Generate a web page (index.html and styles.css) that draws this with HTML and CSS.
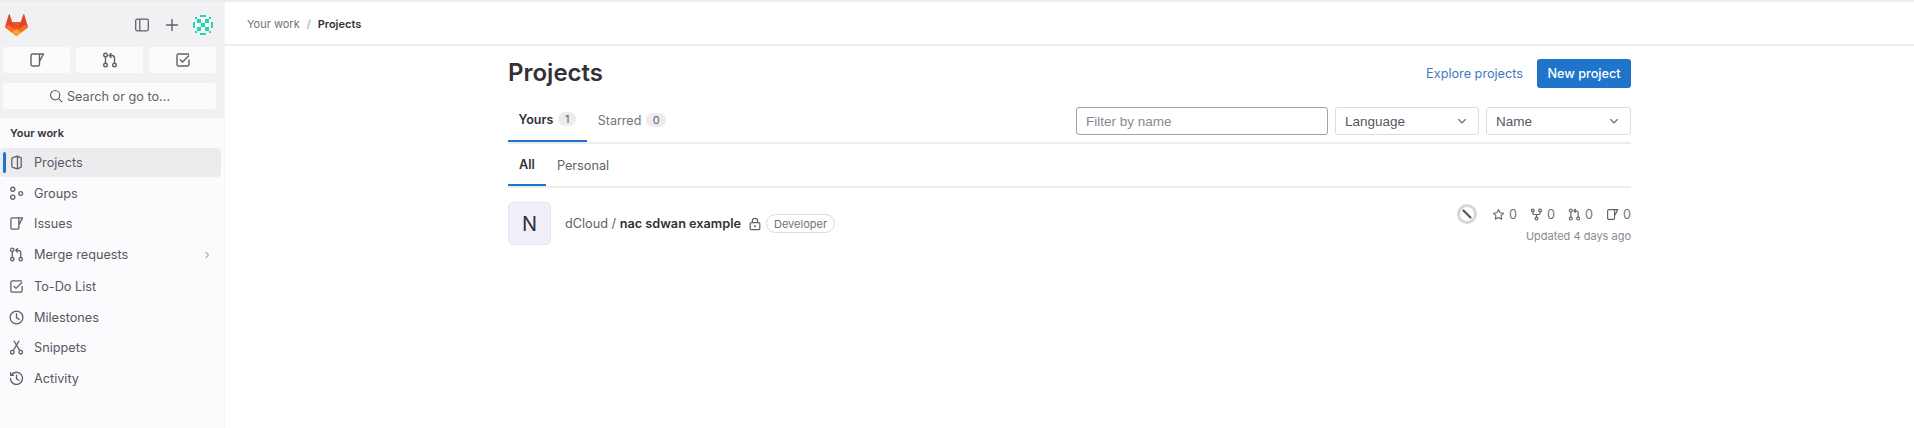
FILE: index.html
```html
<!DOCTYPE html>
<html lang="en">
<head>
<meta charset="utf-8">
<title>Projects</title>
<link rel="stylesheet" href="styles.css">
</head>
<body>
<svg class="defs" width="0" height="0" aria-hidden="true">
  <defs>
    <symbol id="i-issue" viewBox="0 0 16 16"><path d="M3.500 2H10.500V12.500A1.500 1.500 0 0 1 9 14H3.500A1.500 1.500 0 0 1 2 12.500V3.500A1.500 1.500 0 0 1 3.500 2zM10.500 2H14.500L10.500 9.500" fill="none" stroke="currentColor" stroke-width="1.400" stroke-linejoin="round"/></symbol>
    <symbol id="i-mr" viewBox="0 0 16 16"><g fill="none" stroke="currentColor" stroke-width="1.400"><circle cx="3.500" cy="3" r="1.800"/><circle cx="3.500" cy="13" r="1.800"/><circle cx="12.500" cy="13" r="1.800"/><path d="M3.500 4.800v6.400M12.500 11.200V6a2.500 2.500 0 0 0-2.500-2.500H7.500M9.500 1.200 7.200 3.500l2.300 2.300"/></g></symbol>
    <symbol id="i-todo" viewBox="0 0 16 16"><g fill="none" stroke="currentColor" stroke-width="1.400" stroke-linejoin="round"><path d="M14 7.500V12.500a1.500 1.500 0 0 1-1.500 1.500h-9A1.500 1.500 0 0 1 2 12.500v-9A1.500 1.500 0 0 1 3.500 2H14"/><path d="m5 7.500 2.500 2.500L14 3.500"/></g></symbol>
    <symbol id="i-search" viewBox="0 0 16 16"><g fill="none" stroke="currentColor" stroke-width="1.400"><circle cx="7" cy="7" r="5.300"/><path d="m11 11 3.700 3.700" stroke-linecap="round"/></g></symbol>
    <symbol id="i-project" viewBox="0 0 16 16"><g fill="none" stroke="currentColor" stroke-width="1.400" stroke-linejoin="round"><path d="M9 1.300 13 3v10l-4 1.700L4 13.200A1.500 1.500 0 0 1 3 11.800V4.200A1.500 1.500 0 0 1 4 2.800z"/><path d="M9 1.300v13.400"/></g></symbol>
    <symbol id="i-groups" viewBox="0 0 16 16"><g fill="none" stroke="currentColor" stroke-width="1.400"><circle cx="4" cy="3.500" r="2.200"/><circle cx="4" cy="12" r="2.200"/><circle cx="12.500" cy="8" r="2"/></g></symbol>
    <symbol id="i-clock" viewBox="0 0 16 16"><g fill="none" stroke="currentColor" stroke-width="1.400"><circle cx="8" cy="8" r="6.800"/><path d="M8 4v4.300l2.800 1.700" stroke-linecap="round"/></g></symbol>
    <symbol id="i-snippet" viewBox="0 0 16 16"><g fill="none" stroke="currentColor" stroke-width="1.400"><circle cx="3.500" cy="13" r="1.900"/><circle cx="12.500" cy="13" r="1.900"/><path d="M4.500 11.400 10.800 .8M11.500 11.400 5.200 .8"/></g></symbol>
    <symbol id="i-history" viewBox="0 0 16 16"><g fill="none" stroke="currentColor" stroke-width="1.400" stroke-linecap="round"><path d="M2.600 4.200A6.500 6.500 0 1 1 1.500 8"/><path d="M1.800 1.500v3h3"/><path d="M8 4.300v4l2.600 1.600"/></g></symbol>
    <symbol id="i-chev" viewBox="0 0 16 16"><path d="m6 3.500 4.500 4.500L6 12.500" fill="none" stroke="currentColor" stroke-width="1.500" stroke-linecap="round" stroke-linejoin="round"/></symbol>
    <symbol id="i-down" viewBox="0 0 16 16"><path d="M3.500 6 8 10.500 12.500 6" fill="none" stroke="currentColor" stroke-width="1.500" stroke-linecap="round" stroke-linejoin="round"/></symbol>
    <symbol id="i-star" viewBox="0 0 16 16"><path d="m8 1.800 1.900 4 4.400.6-3.200 3 .8 4.400L8 11.700l-3.900 2.100.8-4.400-3.200-3 4.400-.6z" fill="none" stroke="currentColor" stroke-width="1.300" stroke-linejoin="round"/></symbol>
    <symbol id="i-fork" viewBox="0 0 16 16"><g fill="none" stroke="currentColor" stroke-width="1.400"><circle cx="3.500" cy="3" r="1.700"/><circle cx="12.500" cy="3" r="1.700"/><circle cx="8" cy="13" r="1.700"/><path d="M3.500 4.700V6A2 2 0 0 0 5.500 8h5a2 2 0 0 0 2-2V4.700M8 8v3.300"/></g></symbol>
    <symbol id="i-lock" viewBox="0 0 16 16"><g fill="none" stroke="currentColor" stroke-width="1.400"><rect x="2.500" y="6.500" width="11" height="8" rx="1.300"/><path d="M5 6.500V4.500a3 3 0 0 1 6 0v2"/></g><circle cx="8" cy="10.500" r="1.200" fill="currentColor"/></symbol>
  </defs>
</svg>
<div class="app">
  <aside class="sidebar">
    <div class="side-top">
      <div class="brand-row">
        <svg class="logo" viewBox="0 0 24 23" aria-hidden="true">
          <path d="M12 23 .6 14.500a1.300 1.300 0 0 1-.4-1.500L3.800.8c.2-.6 1-.6 1.200 0L7.600 8.500h8.800L19 .8c.2-.6 1-.6 1.200 0L23.800 13a1.300 1.300 0 0 1-.4 1.500z" fill="#e24329"/>
          <path d="M12 23 7.600 8.500h8.800z" fill="#e8542a"/>
          <path d="M12 23 .6 14.500a1.300 1.300 0 0 1-.4-1.500l3.500-1.700 8.300 6.200z" fill="#fc6d26"/>
          <path d="m12 23 11.400-8.500a1.300 1.300 0 0 0 .4-1.500l-3.500-1.700-8.300 6.200z" fill="#fc6d26"/>
          <path d="m12 23-5-3.700 5-3.800 5 3.800z" fill="#fca326"/>
        </svg>
        <div class="brand-actions">
          <svg class="brand-icon" viewBox="0 0 16 16" aria-hidden="true"><g fill="none" stroke="currentColor" stroke-width="1.300"><rect x="1.700" y="2.200" width="12.600" height="11.600" rx="1.500"/><path d="M5.800 2.200v11.600"/></g></svg>
          <svg class="brand-icon plus" viewBox="0 0 16 16" aria-hidden="true"><path d="M8 2.500v11M2.500 8h11" fill="none" stroke="currentColor" stroke-width="1.400" stroke-linecap="round"/></svg>
          <svg class="identicon" viewBox="0 0 22 22" aria-hidden="true">
            <circle cx="11" cy="11" r="11" fill="#eef8f5"/>
            <g fill="#2fd0b0"><rect x="5" y="5" width="4" height="4"/><rect x="13" y="5" width="4" height="4"/><rect x="9" y="9" width="4" height="4"/><rect x="5" y="13" width="4" height="4"/><rect x="13" y="13" width="4" height="4"/><rect x="8" y="1" width="6" height="2"/><rect x="8" y="19" width="6" height="2"/><rect x="1" y="8" width="2" height="6"/><rect x="19" y="8" width="2" height="6"/><rect x="3" y="3" width="2" height="2"/><rect x="17" y="3" width="2" height="2"/><rect x="3" y="17" width="2" height="2"/><rect x="17" y="17" width="2" height="2"/></g>
          </svg>
        </div>
      </div>
      <div class="quick-row">
        <div class="quick-btn"><svg class="ico"><use href="#i-issue"/></svg></div>
        <div class="quick-btn"><svg class="ico"><use href="#i-mr"/></svg></div>
        <div class="quick-btn"><svg class="ico"><use href="#i-todo"/></svg></div>
      </div>
      <div class="search-btn"><svg class="ico"><use href="#i-search"/></svg><span>Search or go to...</span></div>
    </div>
    <nav class="side-nav">
      <div class="nav-title">Your work</div>
      <a class="nav-item active"><svg class="ico"><use href="#i-project"/></svg><span>Projects</span></a>
      <a class="nav-item"><svg class="ico"><use href="#i-groups"/></svg><span>Groups</span></a>
      <a class="nav-item"><svg class="ico"><use href="#i-issue"/></svg><span>Issues</span></a>
      <a class="nav-item has-sub"><svg class="ico"><use href="#i-mr"/></svg><span>Merge requests</span><svg class="chev"><use href="#i-chev"/></svg></a>
      <a class="nav-item"><svg class="ico"><use href="#i-todo"/></svg><span>To-Do List</span></a>
      <a class="nav-item"><svg class="ico"><use href="#i-clock"/></svg><span>Milestones</span></a>
      <a class="nav-item"><svg class="ico"><use href="#i-snippet"/></svg><span>Snippets</span></a>
      <a class="nav-item"><svg class="ico"><use href="#i-history"/></svg><span>Activity</span></a>
    </nav>
  </aside>
  <main class="main">
    <header class="crumbs"><span class="crumb">Your work</span><span class="sep">/</span><strong>Projects</strong></header>
    <div class="container">
      <div class="title-row">
        <h1>Projects</h1>
        <div class="title-actions"><a class="link">Explore projects</a><a class="btn-primary">New project</a></div>
      </div>
      <div class="tabs-row">
        <div class="tabs">
          <a class="tab active">Yours<span class="count">1</span></a>
          <a class="tab muted">Starred<span class="count">0</span></a>
        </div>
        <div class="filters">
          <div class="filter-input">Filter by name</div>
          <div class="select lang"><span>Language</span><svg class="down"><use href="#i-down"/></svg></div>
          <div class="select name"><span>Name</span><svg class="down"><use href="#i-down"/></svg></div>
        </div>
      </div>
      <div class="subtabs">
        <a class="subtab active">All</a>
        <a class="subtab">Personal</a>
      </div>
      <div class="project">
        <div class="avatar">N</div>
        <div class="project-name"><span class="ns">dCloud / </span><strong>nac sdwan example</strong><svg class="lock"><use href="#i-lock"/></svg><span class="role">Developer</span></div>
        <div class="project-meta">
          <div class="stats">
            <span class="ci"><svg viewBox="0 0 20 20" aria-hidden="true"><circle cx="10" cy="10" r="8.500" fill="#fff" stroke="#d6d6da" stroke-width="3"/><path d="m6.500 6.500 7 7" stroke="#55555c" stroke-width="2.200" stroke-linecap="round"/></svg></span>
            <span class="stat"><svg class="st"><use href="#i-star"/></svg>0</span>
            <span class="stat"><svg class="st"><use href="#i-fork"/></svg>0</span>
            <span class="stat"><svg class="st"><use href="#i-mr"/></svg>0</span>
            <span class="stat"><svg class="st"><use href="#i-issue"/></svg>0</span>
          </div>
          <div class="updated">Updated 4 days ago</div>
        </div>
      </div>
    </div>
  </main>
</div>
</body>
</html>
```

FILE: styles.css
```css
* { box-sizing: border-box; }
html, body { margin: 0; height: 100%; }
body { font-family: Inter, "Noto Sans", sans-serif; font-size: 12.700px; color: #333238; background: #fff; overflow: hidden; }
.defs { display: block; height: 0; }
a { color: inherit; text-decoration: none; }
.app { display: flex; height: 428px; border-top: 2px solid #ececef; }

.sidebar { width: 225px; flex: none; background: #fbfafd; display: flex; flex-direction: column; border-right: 1px solid #f4f4f6; }
.side-top { background: #f1f1f3; padding: 0 3px 9px 3px; height: 116px; }
.brand-row { height: 45px; display: flex; align-items: center; justify-content: space-between; padding: 1px 7px 0 2px; }
.logo { width: 23px; height: 22px; display: block; }
.brand-actions { display: flex; align-items: center; color: #626168; }
.brand-icon { width: 16px; height: 16px; margin-right: 14.500px; display: block; }
.brand-icon.plus { margin-right: 12px; }
.identicon { width: 22px; height: 22px; display: block; }
.quick-row { display: flex; gap: 6px; width: 213px; }
.quick-btn { flex: 1; height: 26px; background: #fbfbfc; border-radius: 3px; display: flex; align-items: center; justify-content: center; color: #626168; }
.ico { width: 16px; height: 16px; flex: none; color: #626168; }
.search-btn { width: 213px; height: 26px; margin-top: 10px; background: #fbfbfc; border-radius: 3px; display: flex; align-items: center; justify-content: center; gap: 4px; color: #626168; font-size: 12.700px; }
.search-btn .ico { width: 14px; height: 14px; }
.side-nav { padding: 0 3px 0 0; }
.nav-title { height: 30px; padding: 7px 0 0 10px; font-size: 11px; font-weight: 600; color: #333238; line-height: 16px; }
.nav-item { position: relative; display: flex; align-items: center; height: 29px; margin-bottom: 1.700px; padding-left: 9px; gap: 10px; color: #58575f; border-radius: 4px; font-size: 12.700px; }
.nav-item.has-sub { margin-bottom: 3px; }
.nav-item .ico { width: 15px; height: 15px; }
.nav-item.active { background: #ececef; }
.nav-item.active::before { content: ""; position: absolute; left: 3px; top: 4px; bottom: 4px; width: 3px; border-radius: 2px; background: #1f75cb; }
.chev { width: 10px; height: 10px; margin-left: auto; margin-right: 9px; color: #737278; }

.main { flex: 1; min-width: 0; }
.crumbs { height: 44px; border-bottom: 2px solid #ececef; display: flex; align-items: center; padding: 1px 0 0 22px; font-size: 11px; color: #737278; }
.crumbs strong { font-weight: 600; color: #333238; }
.sep { margin: 0 7px; color: #9a99a0; }
.container { width: 1123px; margin-left: 283px; }
.title-row { display: flex; justify-content: space-between; align-items: center; height: 54px; }
h1 { margin: 0; font-size: 24px; font-weight: 600; color: #333238; line-height: 32px; }
.title-actions { display: flex; align-items: center; gap: 14px; }
.link { color: #3f7ac2; font-size: 12.700px; }
.btn-primary { width: 94px; height: 29px; background: #1f75cb; color: #fff; border-radius: 3px; display: flex; align-items: center; justify-content: center; font-size: 12.700px; font-weight: 500; }

.tabs-row { display: flex; justify-content: space-between; align-items: flex-end; height: 44px; border-bottom: 2px solid #ececef; }
.tabs { display: flex; height: 44px; }
.tab { display: flex; align-items: center; padding: 2px 10.500px 2px; color: #737278; height: 44px; gap: 5px; font-size: 12.500px; }
.tab.muted { padding-left: 11px; }
.tab.active { color: #333238; font-weight: 600; border-bottom: 2px solid #1f75cb; }
.count { min-width: 18px; height: 14px; padding: 0 5px; border-radius: 8px; background: #ececef; font-size: 11px; font-weight: 400; color: #626168; display: inline-flex; align-items: center; justify-content: center; }
.tab.muted .count { min-width: 20px; }
.filters { display: flex; gap: 7px; height: 28px; align-self: flex-start; margin-top: 7px; }
.filter-input { width: 252px; height: 28px; border: 1px solid #a4a3a8; border-radius: 3px; display: flex; align-items: center; padding-left: 9px; color: #8a898f; font-family: "Liberation Sans", sans-serif; font-size: 13.500px; }
.select { height: 28px; border: 1px solid #dcdcde; border-radius: 3px; display: flex; align-items: center; justify-content: space-between; padding: 0 10px 0 9px; color: #58575f; font-family: "Liberation Sans", sans-serif; font-size: 13.500px; }
.select.lang { width: 144px; }
.select.name { width: 145px; }
.down { width: 12px; height: 12px; color: #626168; }

.subtabs { display: flex; height: 44px; border-bottom: 2px solid #ececef; }
.subtab { display: flex; align-items: center; padding: 0 11px; color: #626168; }
.subtab.active { color: #333238; font-weight: 600; border-bottom: 2px solid #1f75cb; }

.project { display: flex; align-items: flex-start; padding-top: 14px; }
.avatar { width: 43px; height: 43px; flex: none; background: #f0effa; border: 1px solid #e6e5ef; border-radius: 5px; display: flex; align-items: center; justify-content: center; font-size: 20px; color: #333238; }
.project-name { display: flex; align-items: center; height: 43px; margin-left: 14px; color: #626168; font-size: 12.700px; }
.ns { white-space: pre; }
.project-name strong { font-weight: 600; color: #333238; }
.lock { width: 14px; height: 14px; margin: 0 4px 0 7px; color: #626168; }
.role { height: 19px; padding: 0 7px; border: 1px solid #dcdcde; border-radius: 10px; font-size: 11px; color: #737278; display: inline-flex; align-items: center; }
.project-meta { margin-left: auto; display: flex; flex-direction: column; align-items: flex-end; padding-top: 2px; }
.stats { display: flex; align-items: center; height: 20px; color: #737278; gap: 13px; font-size: 12.700px; }
.ci { width: 20px; height: 20px; display: block; margin-right: 2px; }
.ci svg { width: 20px; height: 20px; display: block; }
.stat { display: inline-flex; align-items: center; gap: 4px; }
.st { width: 13px; height: 13px; color: #626168; }
.updated { font-size: 11px; color: #8a898f; margin-top: 5px; }
```
